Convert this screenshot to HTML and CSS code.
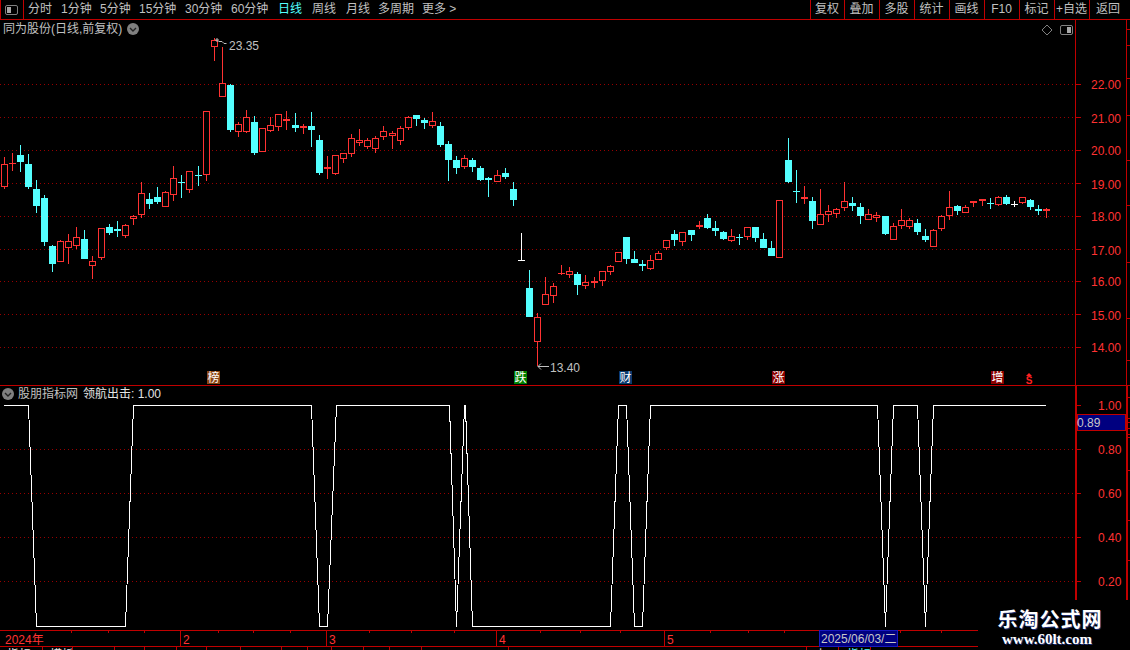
FILE: index.html
```html
<!DOCTYPE html>
<html lang="zh">
<head>
<meta charset="utf-8">
<title>同为股份</title>
<link rel="stylesheet" href="styles.css">
</head>
<body>
<div class="app">
  <header class="toolbar">
    <button class="panel-toggle" aria-label="panel">
      <svg width="13" height="10" viewBox="0 0 13 10"><rect x="0.5" y="0.5" width="12" height="9" rx="1.5" class="tg-frame"/><rect x="2" y="2" width="4" height="6" class="tg-fill"/></svg>
    </button>
    <nav class="periods">
      <span>分时</span><span>1分钟</span><span>5分钟</span><span>15分钟</span><span>30分钟</span><span>60分钟</span><span class="active">日线</span><span>周线</span><span>月线</span><span>多周期</span><span>更多 &gt;</span>
    </nav>
    <nav class="actions">
      <span>复权</span><span>叠加</span><span>多股</span><span>统计</span><span>画线</span><span>F10</span><span>标记</span><span>+自选</span><span>返回</span>
    </nav>
  </header>

  <section class="pane pane-main">
    <svg class="chart" width="1130" height="365" viewBox="0 20 1130 365">
      <g class="grid">
        <line x1="0" x2="1075" y1="84.5" y2="84.5"/><line x1="0" x2="1075" y1="117.5" y2="117.5"/><line x1="0" x2="1075" y1="150.5" y2="150.5"/><line x1="0" x2="1075" y1="183.5" y2="183.5"/><line x1="0" x2="1075" y1="216.5" y2="216.5"/><line x1="0" x2="1075" y1="249.5" y2="249.5"/><line x1="0" x2="1075" y1="281.5" y2="281.5"/><line x1="0" x2="1075" y1="314.5" y2="314.5"/><line x1="0" x2="1075" y1="347.5" y2="347.5"/>
      </g>
      <g id="candles"></g>
      <g class="axis">
        <path d="M1075.5 20V385M1126.5 20V385"/>
        <path d="M1076 84.5h5M1076 117.5h5M1076 150.5h5M1076 183.5h5M1076 216.5h5M1076 249.5h5M1076 281.5h5M1076 314.5h5M1076 347.5h5"/>
        <path d="M1127 29.5h3M1127 45.5h3M1127 78.5h3M1127 115.5h3M1127 160.5h3M1127 205.5h3M1127 262.5h3M1127 318.5h3M1127 360.5h3"/>
      </g>
      <g class="price">
        <text x="1091" y="89">22.00</text><text x="1091" y="123">21.00</text><text x="1091" y="155">20.00</text><text x="1091" y="189">19.00</text><text x="1091" y="221">18.00</text><text x="1091" y="255">17.00</text><text x="1091" y="286">16.00</text><text x="1091" y="320">15.00</text><text x="1091" y="352">14.00</text>
      </g>
      <g class="note">
        <path class="arrow" d="M216 39h2v2h-2zM218.500 41.500L222 41.500L224 43.500L226.500 43.500"/>
        <text x="229" y="50">23.35</text>
        <path class="arrow" d="M538 366.500H549M538 366.500L541 363.500M538 366.500L541 369.500"/>
        <text x="550" y="372">13.40</text>
      </g>
      <g class="tags">
        <rect class="tag-brown" x="207" y="371" width="13" height="13"/><text x="213.500" y="382">榜</text>
        <rect class="tag-green" x="514" y="371" width="13" height="13"/><text x="520.500" y="382">跌</text>
        <rect class="tag-blue" x="619" y="371" width="13" height="13"/><text x="625.500" y="382">财</text>
        <rect class="tag-red" x="772" y="371" width="13" height="13"/><text x="778.500" y="382">涨</text>
        <rect class="tag-red" x="991" y="371" width="13" height="13"/><text x="997.500" y="382">增</text>
      </g>
      <polygon class="s-arrow" points="1029,373 1032,376 1026,376"/>
      <text class="s-mark" x="1029" y="384">S</text>
    </svg>
    <div class="pane-title">
      <span>同为股份(日线,前复权)</span>
      <svg class="chev" width="12" height="12" viewBox="0 0 12 12"><circle cx="6" cy="6" r="6"/><path d="M3 5l3 3 3-3"/></svg>
    </div>
    <div class="pane-tools">
      <svg width="12" height="12" viewBox="0 0 12 12"><path class="tg-frame" d="M6 1l5 5-5 5-5-5z"/></svg>
      <svg width="13" height="10" viewBox="0 0 13 10"><rect x="0.5" y="0.5" width="12" height="9" rx="1.500" class="tg-frame"/><rect x="7" y="2" width="4" height="6" class="tg-fill"/></svg>
    </div>
  </section>

  <section class="pane pane-sub">
    <svg class="chart" width="1130" height="244" viewBox="0 386 1130 244">
      <g class="grid">
        <line x1="0" x2="1075" y1="449.5" y2="449.5"/><line x1="0" x2="1075" y1="493.5" y2="493.5"/><line x1="0" x2="1075" y1="537.5" y2="537.5"/><line x1="0" x2="1075" y1="581.5" y2="581.5"/>
      </g>
      <polyline class="signal" points="4,405.500 28.500,405.500 36.500,626.500 125.500,626.500 133.500,405.500 311.500,405.500 319.500,626.500 327.500,626.500 336.500,405.500 449.500,405.500 456.500,626.500 464.500,405.500 465.500,405.500 472.500,626.500 610.500,626.500 618.500,405.500 626.500,405.500 634.500,626.500 642.500,626.500 650.500,405.500 877.500,405.500 885.500,626.500 893.500,405.500 917.500,405.500 925.500,626.500 933.500,405.500 1046,405.500"/>
      <g class="axis axis-thick">
        <path d="M1076 386V630M1127 386V630"/>
      </g>
      <g class="axis">
        <path d="M1077 405.500h4M1077 449.500h4M1077 493.500h4M1077 537.500h4M1077 581.500h4"/>
        <path d="M1127 397.500h3M1127 418.500h3M1127 422.500h3M1127 428.500h3M1127 434.500h3M1127 437.500h3M1127 470.500h3M1127 520.500h3M1127 560.500h3"/>
      </g>
      <g class="price">
        <text x="1098" y="410">1.00</text><text x="1098" y="454">0.80</text><text x="1098" y="498">0.60</text><text x="1098" y="542">0.40</text><text x="1098" y="586">0.20</text>
      </g>
      <rect class="cursor-box" x="1077.500" y="414.500" width="48" height="16"/>
      <text class="cursor-text" x="1077" y="427">0.89</text>
    </svg>
    <div class="pane-title pane-title-sub">
      <svg class="chev" width="12" height="12" viewBox="0 0 12 12"><circle cx="6" cy="6" r="6"/><path d="M3 5l3 3 3-3"/></svg>
      <span>股朋指标网</span>
      <span class="value">领航出击: 1.00</span>
    </div>
  </section>

  <footer class="time-axis">
    <svg width="978" height="17" viewBox="0 630 978 17">
      <path class="axis" d="M0 630.500H978M0 646.500H978"/>
      <path class="axis" d="M71.500 631v2M108.500 631v2M144.500 631v2M218.500 631v2M253.500 631v2M290.500 631v2M369.500 631v2M411.500 631v2M454.500 631v2M540.500 631v2M580.500 631v2M620.500 631v2M710.500 631v2M748.500 631v2M784.500 631v2M900.500 631v2M941.500 631v2"/>
      <path class="axis" d="M180.500 631v15M326.500 631v15M496.500 631v15M664.500 631v15"/>
      <g class="price">
        <text x="5" y="644">2024年</text><text x="183" y="644">2</text><text x="329" y="644">3</text><text x="499" y="644">4</text><text x="667" y="644">5</text>
      </g>
      <rect class="date-box" x="819.500" y="630.500" width="78" height="16"/>
      <text class="cursor-text" x="821" y="643">2025/06/03/二</text>
    </svg>
  </footer>

  <div class="tabs">
    <span>指标</span><span>模板</span><span></span><span></span><span></span><span></span><span></span><span></span><span></span><span></span><span></span><span></span><span></span><span></span><span></span><span class="t-center">上</span><span class="active t-center">指标</span><span></span>
  </div>

  <aside class="watermark">
    <div class="wm-title">乐淘公式网</div>
    <div class="wm-url">www.60lt.com</div>
  </aside>
</div>
<script src="script.js"></script>
</body>
</html>
```
FILE: styles.css
```css
* { box-sizing: border-box; }
html, body { margin: 0; padding: 0; background: #000; }
.app {
  position: relative;
  width: 1130px;
  height: 650px;
  overflow: hidden;
  background: #000;
  color: #c0c0c0;
  font: 12px/1 "Liberation Sans", "Noto Sans CJK SC", sans-serif;
  display: flex;
  flex-direction: column;
}

/* toolbar */
.toolbar {
  flex: 0 0 20px;
  display: flex;
  border-bottom: 1px solid #c00000;
  line-height: 19px;
}
.panel-toggle {
  width: 24px;
  height: 19px;
  padding: 0 0 0 4px;
  border: 0;
  border-left: 1px solid #c00000;
  border-right: 1px solid #c00000;
  background: #000;
  display: flex;
  align-items: center;
}
.tg-frame { fill: none; stroke: #808080; }
.tg-fill { fill: #a8a8a8; }
.periods {
  margin-left: 4px;
  display: grid;
  grid-template-columns: 33px 39px 39px 46px 46px 47px 34px 34px 32px 44px auto;
  white-space: nowrap;
}
.periods .active { color: #54ffff; }
.actions {
  margin-left: auto;
  display: grid;
  grid-template-columns: 34px repeat(7, 35px) 41px;
  width: 320px;
  text-align: center;
}
.actions span {
  border-left: 1px solid #c00000;
  padding-right: 1px;
  white-space: nowrap;
}
.actions span:last-child { padding-right: 4px; }

/* panes */
.pane { position: relative; }
.pane-main { flex: 0 0 365px; }
.pane-sub { flex: 0 0 245px; border-top: 1px solid #c00000; }
.chart { display: block; }
.grid line { stroke: #980000; stroke-dasharray: 1 3; }
.axis { fill: none; stroke: #c00000; shape-rendering: crispEdges; }
.axis-thick { stroke-width: 2; }
.price text { fill: #ff3232; font-size: 12px; }
.c-red { fill: #000; stroke: #ff3232; }
.w-red { stroke: #ff3232; }
.s-red { fill: #ff3232; }
.w-cyan { stroke: #54ffff; }
.s-cyan { fill: #54ffff; }
.w-white { stroke: #fff; }
.s-white { fill: #fff; }
#candles { shape-rendering: crispEdges; }

.note text { fill: #c0c0c0; font-size: 12px; }
.arrow { fill: none; stroke: #c0c0c0; }
.tags text { fill: #fff; font-size: 12px; text-anchor: middle; }
.tag-brown { fill: #8b4513; }
.tag-green { fill: #008000; }
.tag-blue { fill: #0a3a6e; }
.tag-red { fill: #8b0000; }
.s-arrow { fill: #ff2020; }
.s-mark { fill: #ff2020; font-size: 10px; font-weight: bold; text-anchor: middle; }

.pane-title {
  position: absolute;
  top: 0;
  left: 3px;
  height: 18px;
  display: flex;
  align-items: center;
  gap: 5px;
  white-space: nowrap;
}
.chev circle { fill: #808080; }
.chev path { fill: none; stroke: #222; stroke-width: 1.4; }
.pane-title-sub { left: 2px; height: 16px; gap: 4px; }
.pane-title-sub .value { margin-left: 1px; color: #e4e4e4; }
.pane-tools {
  position: absolute;
  top: 4px;
  left: 1041px;
  display: flex;
  align-items: center;
  gap: 7px;
}

.signal { fill: none; stroke: #fff; shape-rendering: crispEdges; }
.cursor-box { fill: #000080; stroke: #c00000; shape-rendering: crispEdges; }
.cursor-text { fill: #c8c8c8; font-size: 12px; }
.date-box { fill: #000080; stroke: #1818c0; shape-rendering: crispEdges; }

/* time axis + clipped tab row */
.time-axis { flex: 0 0 17px; }
.time-axis svg { display: block; }
.tabs {
  width: 978px;
  flex: 0 0 14px;
  display: grid;
  grid-template-columns: 43px 30px 42px 30px 32px 30px 34px 41px 26px 24px 32px 26px 32px 87px 298px 32px 32px 107px;
  line-height: 14px;
  color: #e8e8e8;
}
.tabs span {
  border-right: 1px solid #c00000;
  padding: 1px 0 0 7px;
  overflow: hidden;
  white-space: nowrap;
}
.tabs span:last-child { border-right: 0; }
.tabs .t-center { padding-left: 8px; }
.tabs .active { color: #54ffff; }

/* watermark */
.watermark {
  position: absolute;
  left: 978px;
  top: 600px;
  width: 152px;
  height: 50px;
  background: #000;
  color: #fff;
  display: flex;
  flex-direction: column;
  align-items: center;
  padding: 7px 8px 0 0;
}
.wm-title {
  font: bold 20px/24px "Noto Sans CJK SC", sans-serif;
  letter-spacing: 1px;
  text-shadow: 1px 1px 0 #1c2c70;
}
.wm-url {
  font: bold 15px/15px "Liberation Serif", serif;
  margin: 1px 0 0 -6px;
  text-shadow: 1px 1px 0 #1c2c70;
}
```
FILE: script.js
```js
// [column, colour, wick top, body top, body bottom, wick bottom]
var R = "red", C = "cyan", W = "white";
var candles = [
[4,R,157,164,187,189],[12,R,153,163,164,171],[20,C,145,155,162,172],[28,C,154,164,187,189],
[36,C,180,189,206,213],[44,C,195,198,242,246],[52,C,245,246,264,272],[60,R,240,241,262,262],
[68,R,234,241,248,264],[76,R,227,237,246,249],[84,C,230,239,259,259],[92,R,256,261,266,279],
[101,R,228,228,258,260],[109,C,224,227,233,235],[117,C,221,229,231,237],[125,R,224,225,236,238],
[133,R,215,216,219,225],[141,R,182,193,215,218],[149,C,193,199,204,209],[157,C,187,197,202,204],
[165,R,191,192,207,207],[173,R,166,178,195,201],[181,C,175,182,183,198],[189,R,171,171,190,193],
[198,C,166,175,176,186],[206,R,111,111,175,181],[214,R,38,40,47,61],[222,R,47,83,97,97],
[230,C,84,85,130,132],[238,R,122,124,132,137],[246,R,110,117,132,133],[254,C,116,122,153,155],
[262,R,128,128,152,152],[270,R,117,125,131,132],[278,R,114,114,127,131],[286,R,111,119,121,130],
[295,C,113,125,128,132],[303,R,124,126,128,134],[311,C,112,126,130,147],[319,C,135,140,173,175],
[327,R,156,167,169,179],[335,R,155,155,174,175],[343,R,153,153,159,163],[351,R,134,138,154,157],
[359,R,129,140,143,146],[367,R,138,140,147,149],[375,R,136,138,149,153],[383,R,126,131,137,140],
[392,R,131,133,136,149],[400,R,126,128,141,145],[408,R,116,117,128,130],[416,C,115,115,119,126],
[424,C,118,120,123,129],[432,R,112,121,126,128],[440,C,122,126,145,147],[448,C,141,144,160,181],
[456,C,156,160,168,174],[464,R,155,158,167,169],[472,C,158,160,167,172],[480,C,166,168,180,181],
[488,C,177,178,180,197],[497,R,170,175,182,182],[505,C,168,173,177,179],[513,C,182,189,200,206],
[521,W,233,260,261,261],[529,C,270,288,317,317],[537,R,313,317,342,366],[545,R,277,294,305,305],
[553,R,283,286,296,303],[561,R,265,273,274,275],[569,R,267,271,275,278],[577,C,272,274,285,295],
[585,R,275,282,286,289],[594,R,277,281,283,288],[602,R,271,271,281,286],[610,R,265,266,272,275],
[618,R,252,252,262,262],[626,C,237,237,259,264],[634,C,251,259,263,263],[642,C,260,264,266,271],
[650,R,255,260,269,270],[658,R,251,253,260,260],[666,R,240,240,248,250],[674,C,230,234,240,246],
[682,R,232,232,242,246],[691,C,230,230,235,241],[699,R,221,225,227,229],[707,C,214,218,228,229],
[715,C,221,228,231,236],[723,C,231,232,239,240],[731,R,229,236,241,242],[739,C,234,237,238,245],
[747,R,227,227,237,240],[755,C,227,227,238,242],[763,C,233,239,248,248],[771,C,241,248,256,256],
[779,R,200,200,258,258],[788,C,138,160,182,183],[796,C,170,191,192,203],[804,R,186,197,199,204],
[812,C,197,201,221,229],[820,R,189,214,225,225],[828,R,205,211,215,222],[836,R,208,209,214,218],
[844,R,182,201,208,211],[852,C,197,203,206,211],[860,C,203,207,216,224],[868,R,209,214,220,220],
[876,R,212,215,218,222],[885,C,216,216,234,235],[893,R,223,226,240,240],[901,R,209,220,226,229],
[909,R,218,220,227,229],[917,C,219,223,232,235],[925,C,229,236,240,242],[933,R,229,230,247,247],
[941,R,215,216,229,231],[949,R,191,207,216,220],[957,C,205,206,211,215],[965,R,205,207,213,213],
[973,R,201,201,203,207],[982,R,199,199,201,206],[990,C,198,203,204,209],[998,R,196,197,205,206],
[1006,C,195,197,204,205],[1014,W,201,204,205,207],[1022,R,197,197,203,204],[1030,C,199,200,207,210],
[1038,C,205,209,211,215],[1046,R,208,209,211,218]
];
var NS = "http://www.w3.org/2000/svg";
var layer = document.getElementById("candles");
function el(name, attrs) {
  var n = document.createElementNS(NS, name);
  for (var k in attrs) n.setAttribute(k, attrs[k]);
  layer.appendChild(n);
}
candles.forEach(function (d) {
  var c = d[0], col = d[1], wt = d[2], bt = d[3], bb = d[4], wb = d[5];
  var mid = c + 0.5, cls = "w-" + col;
  if (wt < bt) el("line", {x1: mid, x2: mid, y1: wt, y2: bt, "class": cls});
  if (wb > bb) el("line", {x1: mid, x2: mid, y1: bb, y2: wb, "class": cls});
  if (bb - bt <= 2) {
    el("rect", {x: c - 3, y: bt, width: 7, height: Math.max(1, bb - bt), "class": "s-" + col});
  } else if (col === R) {
    el("rect", {x: c - 2.5, y: bt + 0.5, width: 6, height: bb - bt - 1, "class": "c-red"});
  } else {
    el("rect", {x: c - 3, y: bt, width: 7, height: bb - bt, "class": "s-" + col});
  }
});
```
